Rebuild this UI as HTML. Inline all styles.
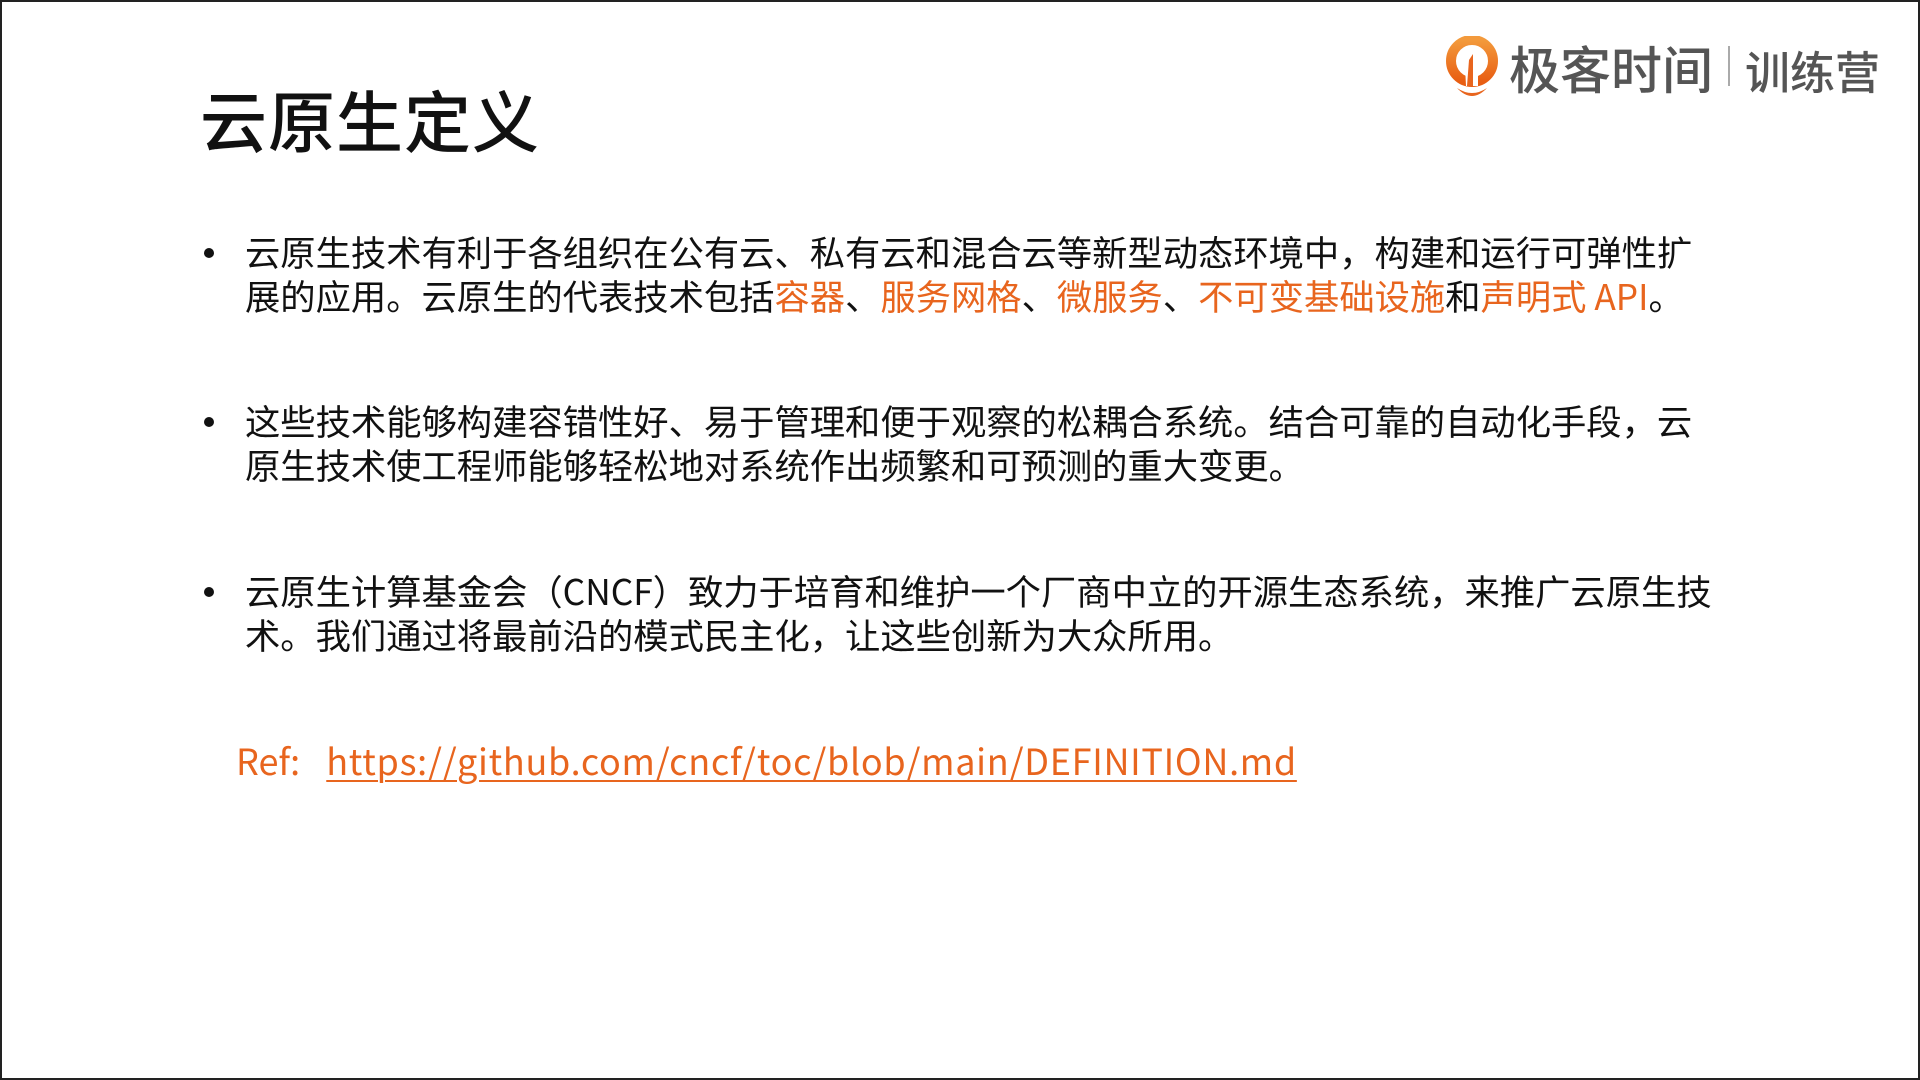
<!DOCTYPE html>
<html><head><meta charset="utf-8"><style>
html,body{margin:0;padding:0}
body{width:1920px;height:1080px;position:relative;background:#fff;overflow:hidden;font-family:"Noto Sans CJK SC","Liberation Sans",sans-serif;color:#111}
.frame{position:absolute;left:0;top:0;width:1916px;height:1076px;border:2px solid #222}
h1{position:absolute;left:200px;top:69px;margin:0;font-size:67px;font-weight:500;line-height:100px;letter-spacing:1px}
.p{position:absolute;left:245px;font-size:35.3px;line-height:44px;white-space:nowrap}
.p:before{content:"";position:absolute;left:-41px;top:18px;width:10px;height:10px;border-radius:50%;background:#111}
.o{color:#e8651e}
.ref{position:absolute;left:236px;top:734px;font-size:36px;line-height:52px;color:#e8651e;white-space:nowrap}
.ref u{text-decoration-thickness:2px;text-underline-offset:5px;letter-spacing:0.7px;margin-left:10px}
.logo{position:absolute;left:1445px;top:36px;height:64px}
.lt{position:absolute;top:-4px;font-size:51px;color:#555;font-weight:500;white-space:nowrap;line-height:70px}
</style></head><body>
<div class="frame"></div>
<h1>云原生定义</h1>
<div class="p" style="top:230px">云原生技术有利于各组织在公有云、私有云和混合云等新型动态环境中，构建和运行可弹性扩<br>展的应用。云原生的代表技术包括<span class="o">容器</span>、<span class="o">服务网格</span>、<span class="o">微服务</span>、<span class="o">不可变基础设施</span>和<span class="o">声明式 API</span>。</div>
<div class="p" style="top:399px">这些技术能够构建容错性好、易于管理和便于观察的松耦合系统。结合可靠的自动化手段，云<br>原生技术使工程师能够轻松地对系统作出频繁和可预测的重大变更。</div>
<div class="p" style="top:569px">云原生计算基金会（CNCF）致力于培育和维护一个厂商中立的开源生态系统，来推广云原生技<br>术。我们通过将最前沿的模式民主化，让这些创新为大众所用。</div>
<div class="ref">Ref:&nbsp; <u>https://github.com/cncf/toc/blob/main/DEFINITION.md</u></div>
<div class="logo">
<svg width="54" height="64" viewBox="0 0 54 64" style="position:absolute;left:0;top:0">
<defs><linearGradient id="g" x1="0" y1="0" x2="0" y2="1"><stop offset="0" stop-color="#f39a3c"/><stop offset="1" stop-color="#e85d12"/></linearGradient></defs>
<circle cx="27" cy="25" r="21" fill="none" stroke="url(#g)" stroke-width="10"/>
<path d="M20 30 L27 20 L33 30 L33 50 L21 50 Z" fill="#fff"/>
<path d="M24 24 L28 18 L28 50 L22 50 Z" fill="#e8651e"/>
<path d="M12 52 Q27 62 42 52 Q27 68 12 52 Z" fill="#e8651e"/>
</svg>
<div class="lt" style="left:64px">极客时间</div>
<div style="position:absolute;left:283px;top:10px;width:2px;height:40px;background:#aaa"></div>
<div class="lt" style="left:300px;font-size:45px;top:-1px">训练营</div>
</div>
</body></html>
